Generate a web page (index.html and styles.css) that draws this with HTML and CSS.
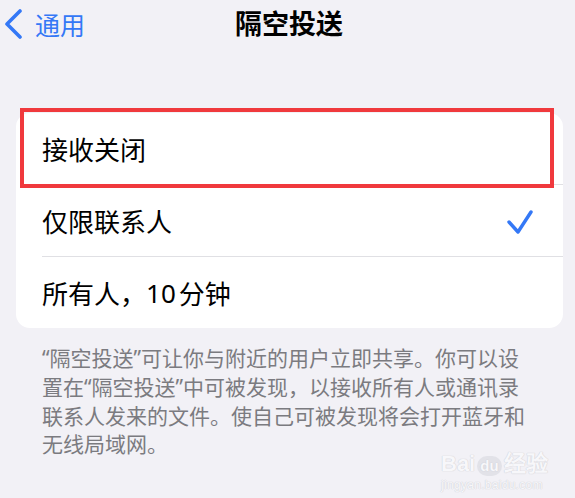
FILE: index.html
```html
<!DOCTYPE html>
<html lang="zh-CN">
<head>
  <meta charset="utf-8">
  <title>隔空投送</title>
  <link rel="stylesheet" href="styles.css">
</head>
<body>

  <div class="navbar">
    <a class="back" href="#">
      <svg class="chevron" width="20" height="30" viewBox="0 0 20 30">
        <polyline points="16,2 3,15 16,28" fill="none" stroke="#3478f6" stroke-width="3.6" stroke-linecap="round" stroke-linejoin="round"/>
      </svg>
      <span>通用</span>
    </a>
    <h1 class="title">隔空投送</h1>
    <div></div>
  </div>

  <div class="list">
    <div class="row">
      <div class="row-inner">接收关闭</div>
      <div class="highlight"></div>
    </div>
    <div class="row">
      <div class="row-inner">
        <span>仅限联系人</span>
        <svg class="check" width="26" height="25" viewBox="0 0 26 25">
          <polyline points="2,13 11,23 24,3" fill="none" stroke="#3478f6" stroke-width="3.4" stroke-linecap="round" stroke-linejoin="round"/>
        </svg>
      </div>
    </div>
    <div class="row last">
      <div class="row-inner">所有人，<span class="num">10</span>分钟</div>
    </div>
  </div>

  <p class="footer">
    <span class="q">“</span>隔空投送<span class="q">”</span>可让你与附近的用户立即共享。你可以设<br>
    置在<span class="q">“</span>隔空投送<span class="q">”</span>中可被发现，以接收所有人或通讯录<br>
    联系人发来的文件。使自己可被发现将会打开蓝牙和<br>
    无线局域网。
  </p>

  <div class="watermark">
    <div class="wm-logo">Bai<span class="wm-du">du</span>经验</div>
    <div class="wm-url">jingyan.baidu.com</div>
  </div>

</body>
</html>
```

FILE: styles.css
```css
body {
  margin: 0;
  background: #f2f1f6;
  font-family: "Noto Sans CJK SC", "Noto Sans", sans-serif;
  color: #000;
  position: relative;
  height: 498px;
  overflow: hidden;
}
.navbar {
  display: grid;
  grid-template-columns: 1fr auto 1fr;
  align-items: center;
  height: 46px;
}
.back {
  display: flex;
  align-items: center;
  gap: 11px;
  padding-left: 4px;
  padding-top: 1px;
  color: #3478f6;
  text-decoration: none;
  font-size: 25px;
  line-height: 30px;
}
.title {
  margin: 0;
  font-size: 27px;
  font-weight: bold;
  line-height: 30px;
  padding-left: 3px;
}
.list {
  margin: 67px 12px 0 16px;
  background: white;
  border-radius: 14px;
  position: relative;
}
.row {
  position: relative;
  padding-left: 26px;
}
.row-inner {
  display: flex;
  align-items: center;
  justify-content: space-between;
  height: 71px;
  padding-right: 30px;
  border-bottom: 1px solid #e0e0e4;
  font-size: 26px;
  line-height: 30px;
}
.row.last .row-inner {
  justify-content: flex-start;
  border-bottom: none;
}
.num {
  font-family: "Noto Sans", sans-serif;
  padding-right: 3px;
}
.check {
  margin-top: 1px;
}
.highlight {
  position: absolute;
  left: 4px;
  top: -5px;
  width: 526px;
  height: 72px;
  border: 4px solid #f0393d;
}
.footer {
  margin: 15px 0 0 42px;
  font-size: 21px;
  line-height: 28px;
  color: #7b7b80;
  white-space: nowrap;
}
.q {
  font-family: "Noto Sans", sans-serif;
}
.watermark {
  position: absolute;
  left: 441px;
  top: 450px;
  color: #f7f7fa;
  text-shadow: 0 0 1px #cfcfd5, 0 0 1px #cfcfd5;
}
.wm-logo {
  font-family: "Liberation Sans", Arial, sans-serif;
  font-size: 22px;
  font-weight: bold;
  line-height: 28px;
}
.wm-du {
  display: inline-block;
  font-size: 15px;
  line-height: 20px;
  padding: 0 3px;
  margin: 0 2px;
  border-radius: 10px;
  background: #e2e2e8;
  color: #f7f7fa;
}
.wm-url {
  font-family: "Liberation Sans", Arial, sans-serif;
  font-size: 12px;
  line-height: 14px;
  letter-spacing: 0.3px;
}
```
